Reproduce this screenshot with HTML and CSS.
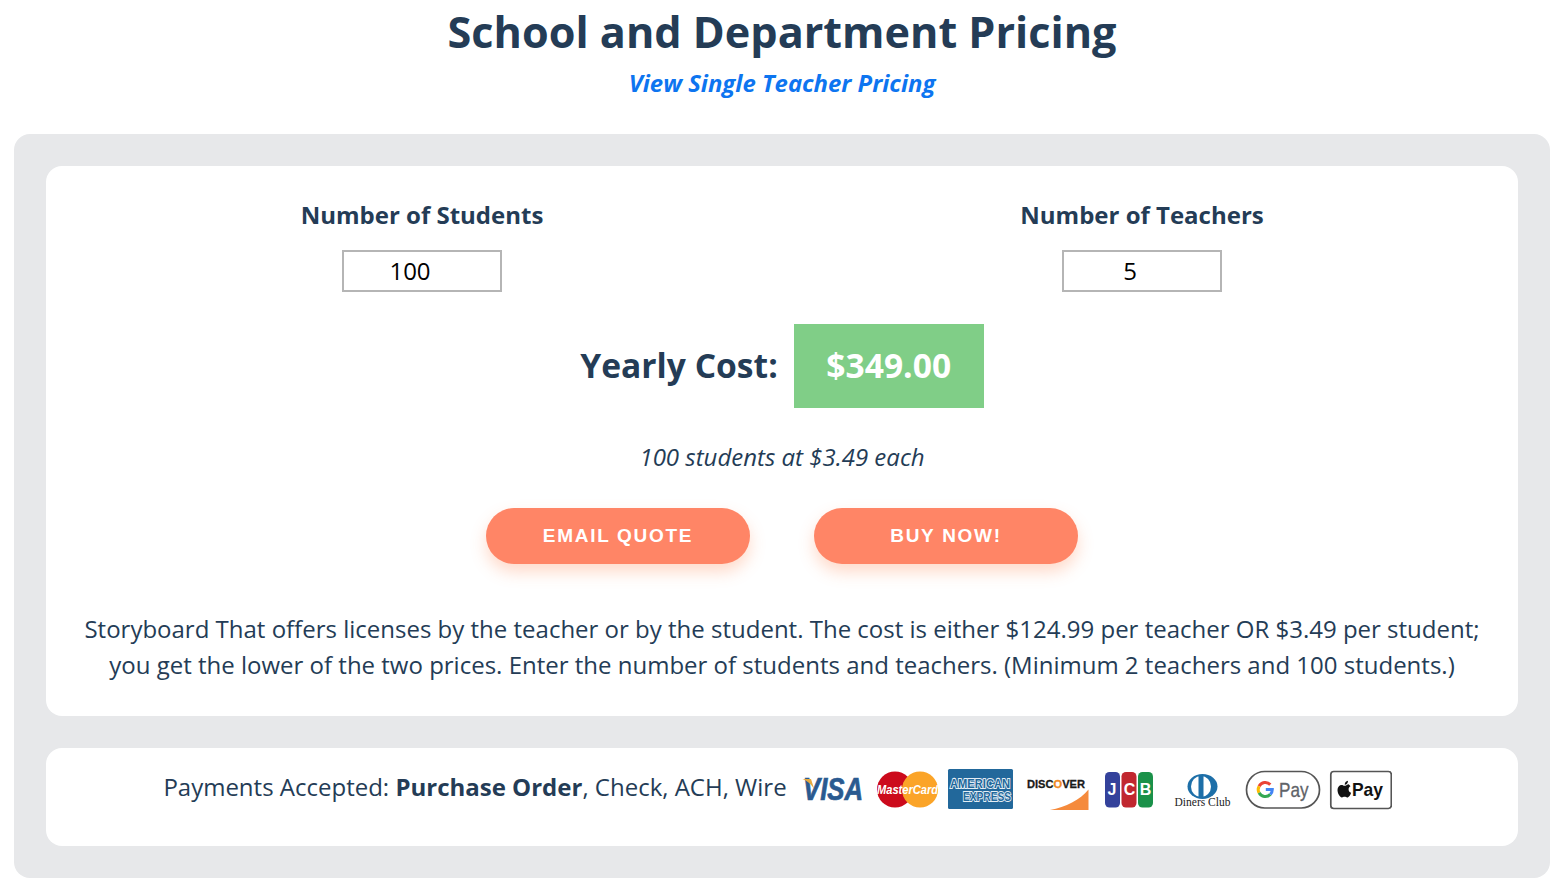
FILE: index.html
```html
<!DOCTYPE html>
<html lang="en">
<head>
<meta charset="utf-8">
<title>School and Department Pricing</title>
<link rel="stylesheet" href="styles.css">
</head>
<body>
<header class="head">
  <h1 class="title">School and Department Pricing</h1>
  <a class="sublink" href="#">View Single Teacher Pricing</a>
</header>
<main class="panel">
  <section class="card calc">
    <div class="fields">
      <div class="field">
        <label class="field-label" for="students">Number of Students</label>
        <input class="num" id="students" type="text" value="100">
      </div>
      <div class="field">
        <label class="field-label" for="teachers">Number of Teachers</label>
        <input class="num" id="teachers" type="text" value="5">
      </div>
    </div>
    <div class="cost">
      <span class="cost-label">Yearly Cost:</span>
      <span class="cost-value">$349.00</span>
    </div>
    <p class="note">100 students at $3.49 each</p>
    <div class="actions">
      <a class="btn" href="#">EMAIL QUOTE</a>
      <a class="btn" href="#">BUY NOW!</a>
    </div>
    <p class="desc">Storyboard That offers licenses by the teacher or by the student. The cost is either $124.99 per teacher OR $3.49 per student; you get the lower of the two prices. Enter the number of students and teachers. (Minimum 2 teachers and 100 students.)</p>
  </section>
  <section class="card pay">
    <span class="pay-text">Payments Accepted: <b>Purchase Order</b>, Check, ACH, Wire</span>
    <svg class="logos" width="590" height="44" viewBox="802 767 590 44" role="img" aria-label="Visa, MasterCard, American Express, Discover, JCB, Diners Club, Google Pay, Apple Pay">
      <!-- Visa -->
      <text x="803" y="800" textLength="60" lengthAdjust="spacingAndGlyphs" class="t-visa">VISA</text>
      <path d="M802.500 779 L811 779 L814.500 790 C812 784.500 807.500 781 802.500 779Z" fill="#e6a93e"/>
      <!-- MasterCard -->
      <circle cx="895" cy="789.500" r="18" fill="#cc0a1c"/>
      <circle cx="920" cy="789.500" r="18" fill="#fba428"/>
      <text x="877" y="793.500" textLength="61" lengthAdjust="spacingAndGlyphs" class="t-mc">MasterCard</text>
      <!-- American Express -->
      <rect x="948" y="769" width="65" height="40" rx="1.500" fill="#22689b"/>
      <text x="950" y="788" textLength="60" lengthAdjust="spacingAndGlyphs" class="t-ax">AMERICAN</text>
      <text x="963" y="801" textLength="48" lengthAdjust="spacingAndGlyphs" class="t-ax">EXPRESS</text>
      <!-- Discover -->
      <text x="1027" y="787.500" textLength="58" lengthAdjust="spacingAndGlyphs" class="t-disc">DISC<tspan class="t-disc-o">O</tspan>VER</text>
      <path d="M1050 810 C1066 807 1080 800 1088.500 789.500 L1088.500 810Z" fill="#f58a3c"/>
      <!-- JCB -->
      <rect x="1105" y="772" width="15" height="35.500" rx="4.500" fill="#34429b"/>
      <rect x="1121.500" y="772" width="15" height="35.500" rx="4.500" fill="#c1272f"/>
      <rect x="1138" y="772" width="15" height="35.500" rx="4.500" fill="#1a9149"/>
      <text x="1112" y="795" text-anchor="middle" class="t-jcb">J</text>
      <text x="1129.500" y="795" text-anchor="middle" class="t-jcb">C</text>
      <text x="1145.500" y="795" text-anchor="middle" class="t-jcb">B</text>
      <!-- Diners Club -->
      <ellipse cx="1202.500" cy="786.500" rx="15" ry="12.500" fill="#1d6fa8"/>
      <ellipse cx="1201" cy="786.500" rx="10" ry="10.500" fill="#fff"/>
      <rect x="1198.500" y="776" width="5" height="21" fill="#1d6fa8"/>
      <text x="1174.500" y="805.500" textLength="56" lengthAdjust="spacingAndGlyphs" class="t-din">Diners Club</text>
      <!-- Google Pay -->
      <rect x="1246.500" y="771.500" width="73" height="36.500" rx="18.250" fill="#fff" stroke="#555" stroke-width="1.700"/>
      <path d="M1270.300 784.600 A7 7 0 0 0 1259.100 786.200" class="g-arc g-red"/>
      <path d="M1259.100 786.200 A7 7 0 0 0 1259.100 792.800" class="g-arc g-yellow"/>
      <path d="M1259.100 792.800 A7 7 0 0 0 1270.300 794.400" class="g-arc g-green"/>
      <path d="M1270.300 794.400 A7 7 0 0 0 1272.300 789.500 L1265.800 789.500" class="g-arc g-blue"/>
      <text x="1279" y="796.700" textLength="29.500" lengthAdjust="spacingAndGlyphs" class="t-gp">Pay</text>
      <!-- Apple Pay -->
      <rect x="1330.800" y="771.500" width="60.500" height="37" rx="3" fill="#fff" stroke="#555" stroke-width="1.700"/>
      <g transform="translate(1331 770.500)">
        <path d="M16.600 14.500c-1.200 0-2 .8-3 .8s-1.800-.8-3-.8c-2.200 0-4.100 2-4.100 5 0 3.600 2.600 7.500 4.400 7.500 1 0 1.500-.7 2.700-.7s1.600.7 2.700.7c1.500 0 3.200-2.700 3.800-4.800-1.700-.7-2.500-1.900-2.500-3.300 0-1.400.7-2.500 1.900-3.100-.7-1.300-2-2.300-2.900-2.300Z" fill="#111"/>
        <path d="M13.700 14.300c0-2.100 1.300-3.700 3.300-4 .1 2.100-1.300 3.900-3.300 4Z" fill="#111"/>
      </g>
      <text x="1352" y="796" textLength="31" lengthAdjust="spacingAndGlyphs" class="t-ap">Pay</text>
    </svg>
  </section>
</main>
</body>
</html>
```
FILE: styles.css
```css
* { box-sizing: border-box; }
html, body { margin: 0; padding: 0; }
body {
  background: #fff;
  color: #243c56;
  font-family: "Open Sans", "Noto Sans", sans-serif;
  height: 894px;
  overflow: hidden;
}
.head {
  display: flex;
  flex-direction: column;
  align-items: center;
  height: 134px;
  padding-top: 4px;
}
.title {
  margin: 0 2px 0 0;
  font-size: 43.2px;
  line-height: 56px;
  font-weight: 700;
}
.sublink {
  margin: 7px 2px 0 0;
  font-size: 23.9px;
  line-height: 32px;
  font-weight: 700;
  font-style: italic;
  color: #0d75f0;
  text-decoration: none;
}
.panel {
  margin: 0 16px 0 14px;
  padding: 32px;
  height: 744px;
  background: #e7e8ea;
  border-radius: 16px;
  display: flex;
  flex-direction: column;
  gap: 32px;
}
.card {
  background: #fff;
  border-radius: 16px;
}
.calc {
  height: 550px;
  padding: 31px 16px 0;
  display: flex;
  flex-direction: column;
  align-items: center;
}
.fields {
  display: grid;
  grid-template-columns: 1fr 1fr;
  width: 100%;
}
.field {
  display: flex;
  flex-direction: column;
  align-items: center;
  gap: 17px;
}
.field-label {
  font-size: 24px;
  line-height: 36px;
  font-weight: 700;
}
.num {
  width: 160px;
  height: 42px;
  border: 2px solid #b5b5b5;
  border-radius: 0;
  padding: 0 24px 2px 0;
  background: #fff;
  color: #000;
  text-align: center;
  font-family: "Open Sans", sans-serif;
  font-size: 24px;
}
.cost {
  margin-top: 32px;
  display: flex;
  align-items: center;
  gap: 16px;
}
.cost-label {
  padding-bottom: 2px;
  font-size: 33.6px;
  font-weight: 700;
}
.cost-value {
  width: 190px;
  height: 84px;
  padding-bottom: 2px;
  background: #80ce87;
  color: #fff;
  font-size: 33.6px;
  font-weight: 700;
  display: flex;
  align-items: center;
  justify-content: center;
}
.note {
  margin: 31px 0 0;
  font-size: 24px;
  line-height: 36px;
  font-style: italic;
}
.actions {
  margin-top: 33px;
  display: flex;
  gap: 64px;
}
.btn {
  width: 264px;
  height: 56px;
  padding-bottom: 1px;
  border-radius: 28px;
  background: #ff8566;
  box-shadow: 0 8px 16px rgba(255, 133, 80, .3);
  color: #fff;
  font-family: "Liberation Sans", Arial, sans-serif;
  font-size: 19px;
  font-weight: 700;
  letter-spacing: 1.7px;
  text-decoration: none;
  display: flex;
  align-items: center;
  justify-content: center;
}
.desc {
  margin: 47px 0 0;
  text-align: center;
  font-size: 24px;
  line-height: 36px;
}
.pay {
  height: 98px;
  padding: 0 9px 20px 0;
  display: flex;
  align-items: center;
  justify-content: center;
  gap: 15px;
}
.pay-text {
  font-size: 24px;
  line-height: 36px;
}
.pay-text b { font-weight: 700; }
.logos {
  display: block;
  flex: none;
  margin-top: 4px;
}
.t-visa { font: italic 700 31px "Liberation Sans", sans-serif; fill: #2a5a90; stroke: #2a5a90; stroke-width: .7px; }
.t-mc { font: italic 700 12px "Liberation Sans", sans-serif; fill: #fff; }
.t-ax {
  font: 700 12.500px "Liberation Sans", sans-serif;
  fill: #22689b;
  stroke: #e4eef5;
  stroke-width: 1.800px;
  paint-order: stroke;
}
.t-disc { font: 700 11.500px "Liberation Sans", sans-serif; fill: #1a1a1a; stroke: #1a1a1a; stroke-width: .3px; }
.t-disc-o { fill: #f08a24; stroke: #f08a24; }
.t-jcb { font: 700 16px "Liberation Sans", sans-serif; fill: #fff; }
.t-din { font: 12px "Liberation Serif", serif; fill: #222; }
.t-gp { font: 400 21px "Liberation Sans", sans-serif; fill: #5f6368; stroke: #5f6368; stroke-width: .3px; }
.t-ap { font: 700 19px "Liberation Sans", sans-serif; fill: #111; }
.g-arc { fill: none; stroke-width: 3px; }
.g-red { stroke: #ea4335; }
.g-yellow { stroke: #fbbc04; }
.g-green { stroke: #34a853; }
.g-blue { stroke: #4285f4; }
```
